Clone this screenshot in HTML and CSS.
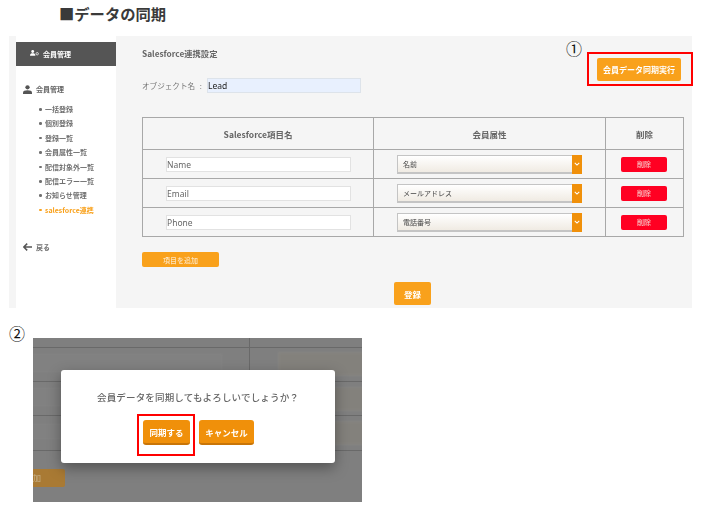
FILE: index.html
```html
<!DOCTYPE html>
<html lang="ja">
<head>
<meta charset="utf-8">
<title>データの同期</title>
<link rel="stylesheet" href="styles.css">
</head>
<body>
<h1 class="page-title">■データの同期</h1>
<section class="shot">
  <div class="panel">
    <aside class="side">
      <div class="side-head">
        <svg class="ic-users" viewBox="0 0 12 8"><circle cx="3.6" cy="2" r="1.9"/><path d="M0 7.8c0-2.8 1.5-3.5 3.6-3.5s3.6.7 3.6 3.5z"/><circle cx="9.6" cy="5" r="1.6" fill="none" stroke="#fff" stroke-width="1"/></svg>
        <span>会員管理</span>
      </div>
      <div class="side-group">
        <svg class="ic-user" viewBox="0 0 10 10"><circle cx="5" cy="2.6" r="2.4"/><path d="M0 10V8.4C0 6.6 2 5.8 5 5.8s5 .8 5 2.6V10z"/></svg>
        <span>会員管理</span>
      </div>
      <ul class="side-list">
        <li>一括登録</li>
        <li>個別登録</li>
        <li>登録一覧</li>
        <li>会員属性一覧</li>
        <li>配信対象外一覧</li>
        <li>配信エラー一覧</li>
        <li>お知らせ管理</li>
        <li class="active">salesforce連携</li>
      </ul>
      <div class="side-back">
        <svg class="ic-back" viewBox="0 0 9 8"><path d="M4.2 .6.8 4l3.4 3.4M1 4h8" fill="none" stroke="#555" stroke-width="1.5"/></svg>
        <span>戻る</span>
      </div>
    </aside>
    <main class="main">
      <div class="main-top">
        <div class="main-left">
          <h2 class="main-title">Salesforce連携設定</h2>
          <div class="object-row">
            <span>オブジェクト名 :</span>
            <input class="object-input" value="Lead" readonly>
          </div>
        </div>
        <button class="sync-btn">会員データ同期実行</button>
      </div>
      <table class="map">
        <thead>
          <tr><th class="c1">Salesforce項目名</th><th class="c2">会員属性</th><th class="c3">削除</th></tr>
        </thead>
        <tbody>
          <tr>
            <td><div class="fake-input">Name</div></td>
            <td><div class="fake-select"><span>名前</span><i class="arrow"><svg viewBox="0 0 8 5"><path d="M1 1l3 3 3-3" fill="none" stroke="#fff" stroke-width="1.4"/></svg></i></div></td>
            <td><button class="del">削除</button></td>
          </tr>
          <tr>
            <td><div class="fake-input">Email</div></td>
            <td><div class="fake-select"><span>メールアドレス</span><i class="arrow"><svg viewBox="0 0 8 5"><path d="M1 1l3 3 3-3" fill="none" stroke="#fff" stroke-width="1.4"/></svg></i></div></td>
            <td><button class="del">削除</button></td>
          </tr>
          <tr>
            <td><div class="fake-input">Phone</div></td>
            <td><div class="fake-select"><span>電話番号</span><i class="arrow"><svg viewBox="0 0 8 5"><path d="M1 1l3 3 3-3" fill="none" stroke="#fff" stroke-width="1.4"/></svg></i></div></td>
            <td><button class="del">削除</button></td>
          </tr>
        </tbody>
      </table>
      <button class="add-btn">項目を追加</button>
      <div class="save-row"><button class="save-btn">登録</button></div>
    </main>
  </div>
  <span class="mark mark-1">①</span>
  <div class="red-box red-sync"></div>
</section>
<section class="step2">
  <span class="mark-2">②</span>
  <div class="modal-shot">
    <div class="ghost-box gb1"></div>
    <div class="ghost-box gb2"></div>
    <div class="ghost-box gb3"></div>
    <div class="ghost-box gb4"></div>
    <div class="ghost-box gb5"></div>
    <div class="ghost-box gb6"></div>
    <div class="ghost g-h1"></div>
    <div class="ghost g-h2"></div>
    <div class="ghost g-h3"></div>
    <div class="ghost g-h4"></div>
    <div class="ghost g-v1"></div>
    <div class="ghost-add">加</div>
    <div class="dialog">
      <p class="dialog-text">会員データを同期してもよろしいでしょうか？</p>
      <div class="dialog-btns">
        <button class="dlg-btn dlg-ok">同期する</button>
        <button class="dlg-btn dlg-cancel">キャンセル</button>
      </div>
    </div>
    <div class="red-box red-ok"></div>
  </div>
</section>
</body>
</html>
```
FILE: styles.css
```css
* { box-sizing: border-box; }
html, body { margin: 0; padding: 0; background: #fff; }
body {
  width: 714px;
  height: 509px;
  overflow: hidden;
  font-family: "Noto Sans CJK JP", "Noto Sans", sans-serif;
  color: #555;
}
button { font-family: inherit; border: 0; padding: 0; }

.page-title {
  margin: 0;
  height: 36px;
  padding: 1px 0 0 59px;
  font-size: 15.3px;
  line-height: 24px;
  font-weight: 700;
  color: #3a3a3a;
}

.shot { position: relative; height: 272px; }
.panel {
  margin-left: 9px;
  width: 683px;
  height: 272px;
  padding-left: 7px;
  background: #f5f5f5;
  display: flex;
  filter: blur(.4px);
}

.side {
  width: 100px;
  background: #fff;
  padding-top: 6px;
  flex: none;
}
.side-head {
  height: 24px;
  background: #555;
  color: #fff;
  font-size: 7px;
  font-weight: 700;
  display: flex;
  align-items: center;
  gap: 4px;
  padding-left: 14px;
}
.ic-users { width: 9px; height: 6px; fill: #fff; margin-top: -2px; }
.side-group {
  margin-top: 17px;
  padding-left: 7px;
  display: flex;
  align-items: center;
  gap: 4px;
  font-size: 7px;
  font-weight: 700;
  height: 12px;
  color: #666;
}
.ic-user { width: 9px; height: 9px; fill: #555; }
.side-list {
  list-style: none;
  margin: 7px 0 0;
  padding: 0 0 0 22px;
  font-size: 7px;
  line-height: 14.4px;
  font-weight: 700;
  color: #707070;
}
.side-list li { position: relative; padding-left: 7px; white-space: nowrap; }
.side-list li::before {
  content: "";
  position: absolute;
  left: 1px;
  top: 6px;
  width: 2.5px;
  height: 2.5px;
  border-radius: 50%;
  background: currentColor;
}
.side-list .active { color: #f9a11b; font-weight: 700; }
.side-back {
  margin-top: 24px;
  padding-left: 7px;
  display: flex;
  align-items: center;
  gap: 4px;
  font-size: 7px;
  font-weight: 700;
  height: 12px;
  color: #707070;
}
.ic-back { width: 9px; height: 8px; }

.main { flex: 1; padding: 0 8px 0 26px; min-width: 0; }
.main-top { display: flex; justify-content: space-between; height: 81px; }
.main-left { padding-top: 11px; }
.main-title {
  margin: 0;
  font-size: 8.3px;
  line-height: 13px;
  font-weight: 700;
  color: #666;
}
.object-row {
  margin-top: 18px;
  display: flex;
  align-items: center;
  font-size: 7.6px;
  color: #777;
  height: 15px;
}
.object-row span { width: 65px; white-space: nowrap; word-spacing: 3px; }
.object-input {
  width: 154px;
  height: 15px;
  border: 1px solid #dde3ea;
  background: #e8f0fe;
  font: 8.5px "Noto Sans", sans-serif;
  color: #222;
  padding: 0;
}
.sync-btn {
  margin-top: 22px;
  margin-right: 3px;
  width: 84px;
  height: 23px;
  background: #f9a11b;
  border-radius: 2px;
  color: #fff;
  font-size: 8px;
  font-weight: 700;
  white-space: nowrap;
}

.map {
  width: 541px;
  border-collapse: collapse;
  table-layout: fixed;
  font-size: 8.5px;
}
.map th, .map td { border: 1px solid #a8a8a8; padding: 0; text-align: center; height: 29px; }
.map th { height: 32px; font-weight: 700; color: #666; }
.c1 { width: 231px; }
.c2 { width: 232px; }
.c3 { width: 78px; }
.fake-input {
  width: 185px;
  height: 15px;
  margin-left: 23px;
  background: #fff;
  border: 1px solid #e2e2e2;
  font: 8.5px/13px "Noto Sans", sans-serif;
  color: #666;
  text-align: left;
  padding-left: 0;
}
.fake-select {
  width: 185px;
  height: 19px;
  margin-left: 23px;
  display: flex;
  justify-content: space-between;
  background: linear-gradient(#fff, #f0ebe3);
  border: 1px solid #c4c4c4;
  border-bottom-width: 2px;
  font-size: 7px;
  line-height: 16px;
  color: #444;
  text-align: left;
  padding-left: 5px;
}
.arrow {
  width: 10px;
  margin: -1px -1px -2px 0;
  background: #f0900a;
  display: flex;
  align-items: center;
  justify-content: center;
}
.arrow svg { width: 6px; height: 4px; }
.del {
  display: block;
  margin: 0 0 0 15px;
  width: 46px;
  height: 15px;
  background: #ff0022;
  border-radius: 2px;
  color: #f8c8c8;
  font-size: 7px;
  font-weight: 500;
}
.add-btn {
  display: block;
  margin-top: 15px;
  width: 77px;
  height: 15px;
  background: #f9a11b;
  border-radius: 2px;
  color: #fde3bb;
  font-size: 7px;
  font-weight: 500;
}
.save-row { margin-top: 15px; display: flex; justify-content: center; padding-right: 1px; }
.save-btn {
  width: 37px;
  height: 23px;
  background: #f9a11b;
  border-radius: 2px;
  color: #fff;
  font-size: 8.5px;
  font-weight: 700;
}

.mark {
  position: absolute;
  left: 566px;
  top: 2px;
  font: 16px/20px "Noto Sans CJK JP", serif;
  color: #111;
}
.red-box { position: absolute; border: 2px solid #f00; }
.red-sync { left: 587px; top: 16px; width: 106px; height: 34px; }

.step2 { position: relative; height: 201px; }
.mark-2 {
  position: absolute;
  left: 9px;
  top: 15px;
  font: 16px/20px "Noto Sans CJK JP", serif;
  color: #111;
}
.modal-shot {
  position: absolute;
  left: 33px;
  top: 30px;
  width: 329px;
  height: 164px;
  background: #7f7f7f;
  overflow: hidden;
}
.ghost { position: absolute; background: #696969; filter: blur(.6px); }
.g-h1 { left: 0; top: 9px; width: 100%; height: 1px; }
.g-h2 { left: 0; top: 43px; width: 100%; height: 1px; }
.g-h3 { left: 0; top: 77px; width: 100%; height: 1px; }
.g-h4 { left: 0; top: 112px; width: 100%; height: 1px; }
.g-v1 { left: 216px; top: 0; width: 1px; height: 32px; }
.ghost-box {
  position: absolute;
  border: 1px solid #868686;
  background: #818181;
  filter: blur(.9px);
}
.gb1 { left: -10px; top: 16px; width: 199px; height: 18px; }
.gb2 { left: -10px; top: 50px; width: 199px; height: 18px; }
.gb3 { left: -10px; top: 86px; width: 199px; height: 15px; }
.gb4 { left: 245px; top: 14px; width: 110px; height: 24px; border-color: #8a8a86; background: #83817c; }
.gb5 { left: 245px; top: 49px; width: 110px; height: 24px; border-color: #8a8a86; background: #83817c; }
.gb6 { left: 245px; top: 83px; width: 110px; height: 24px; border-color: #8a8a86; background: #83817c; }
.ghost-add {
  position: absolute;
  left: -4px;
  top: 131px;
  width: 36px;
  height: 18px;
  background: #a97a34;
  border-radius: 2px;
  color: #c8b48e;
  font-size: 8px;
  line-height: 18px;
  padding-left: 4px;
  filter: blur(.5px);
}
.dialog {
  position: absolute;
  left: 28px;
  top: 32px;
  width: 274px;
  height: 93px;
  background: #fff;
  border-radius: 3px;
  box-shadow: 0 5px 14px rgba(0, 0, 0, .35);
  padding-top: 18px;
}
.dialog-text {
  margin: 0;
  text-align: center;
  font-size: 9.5px;
  line-height: 18px;
  font-weight: 500;
  color: #666;
  letter-spacing: .17px;
  filter: blur(.3px);
}
.dialog-btns {
  margin-top: 14px;
  padding-left: 82px;
  display: flex;
  gap: 9px;
}
.dlg-btn {
  height: 25px;
  background: #f0900a;
  border-bottom: 2px solid #c97507;
  border-radius: 3px;
  color: #fff;
  font-size: 8.5px;
  font-weight: 700;
  filter: blur(.25px);
}
.dlg-ok { width: 47px; }
.dlg-cancel { width: 55px; }
.red-ok { left: 104px; top: 76px; width: 58px; height: 42px; }
```
